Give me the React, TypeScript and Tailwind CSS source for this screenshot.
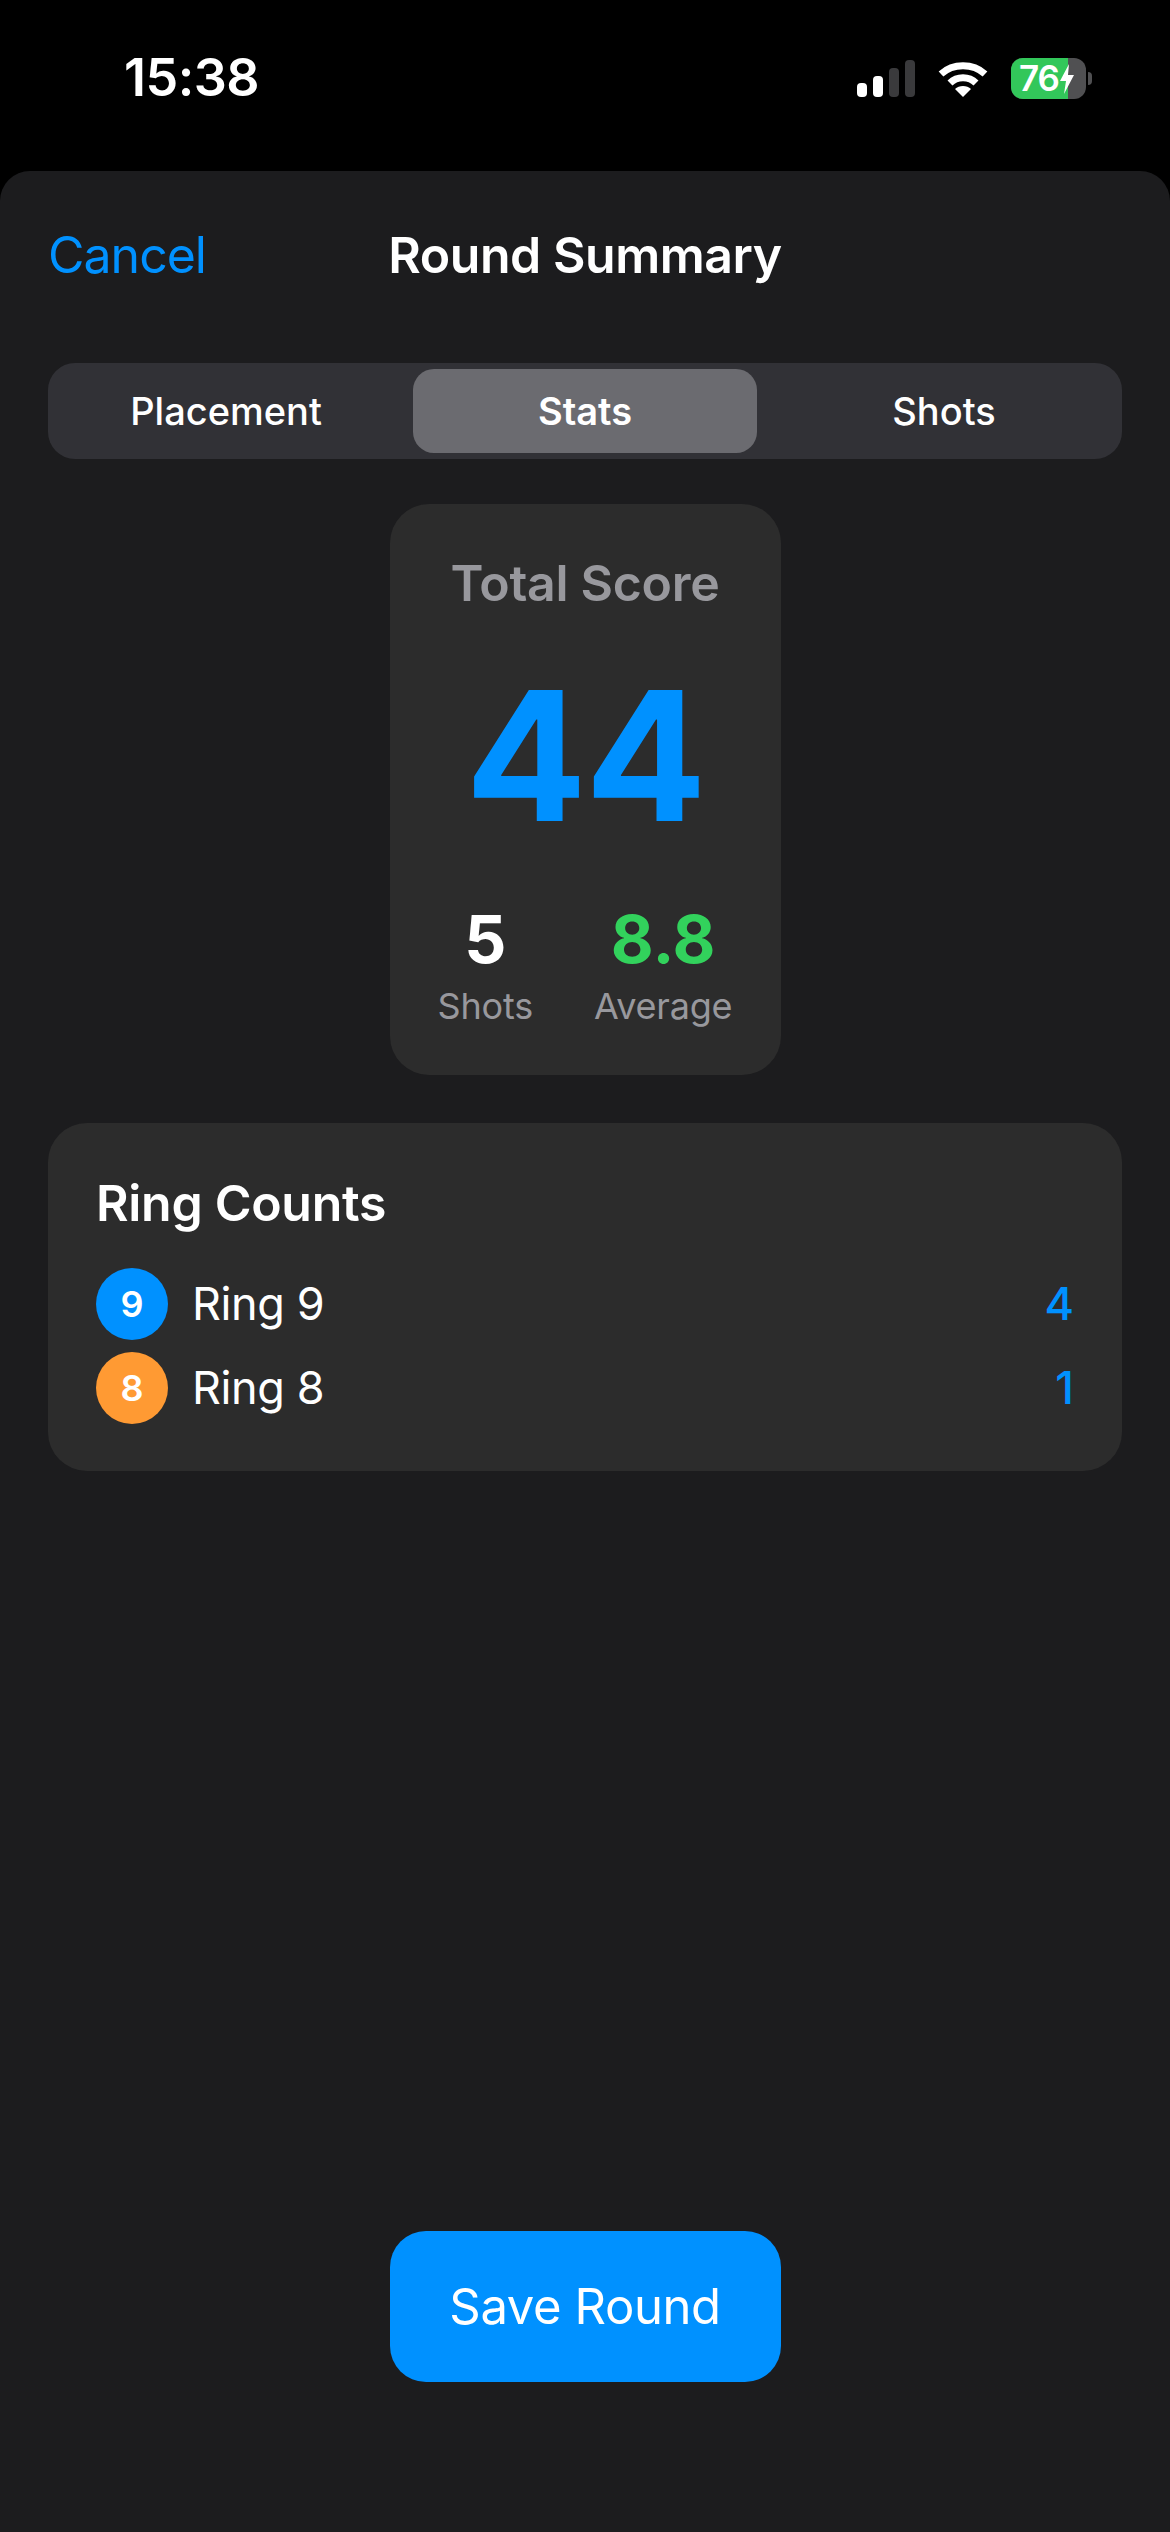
const tabs = ["Placement", "Stats", "Shots"];

const rings = [
  { ring: 9, count: 4, color: "bg-[#0091ff]" },
  { ring: 8, count: 1, color: "bg-[#ff9a33]" },
];

function StatusIcons() {
  return (
    <div className="flex items-center">
      <svg width="60" height="37" viewBox="0 0 60 37" className="mr-[21px]">
        <rect x="0" y="23" width="10" height="14" rx="4" fill="#fff" />
        <rect x="16" y="16" width="10" height="21" rx="4" fill="#fff" />
        <rect x="32" y="8" width="10" height="29" rx="4" fill="#3a3a3c" />
        <rect x="48" y="0" width="10" height="37" rx="4" fill="#3a3a3c" />
      </svg>
      <svg width="50" height="37" viewBox="0 0 50 37" className="mr-[23px]">
        <path d="M3 14 C15 3 35 3 47 14" fill="none" stroke="#fff" strokeWidth="7" strokeLinecap="butt" />
        <path d="M12 23 C19 16 31 16 38 23" fill="none" stroke="#fff" strokeWidth="7" strokeLinecap="butt" />
        <path d="M25 37 L17 29 C21 25 29 25 33 29 Z" fill="#fff" />
      </svg>
      <div className="relative flex h-[41px] w-[75px] items-center overflow-hidden rounded-[12px] bg-[#505052]">
        <div className="absolute inset-y-0 left-0 w-[57px] bg-[#32c75a]" />
        <span className="relative ml-[8px] text-[35px] leading-none font-semibold tracking-[-1px] text-white">76</span>
        <svg width="14" height="30" viewBox="0 0 14 30" className="relative ml-[1px]">
          <path d="M9 0 L0 17 H6 L4 30 L14 11 H8 Z" fill="#fff" />
        </svg>
      </div>
      <div className="ml-[2px] h-[13px] w-[4px] rounded-r-full bg-[#505052]" />
    </div>
  );
}

export default function App() {
  return (
    <div className="flex h-[2532px] w-[1170px] flex-col bg-black font-['Inter',sans-serif] text-white antialiased">
      {/* status bar */}
      <div className="flex h-[171px] shrink-0 items-start justify-between pt-[50px] pr-[78px] pl-[124px]">
        <span className="text-[52px] leading-[56px] font-semibold tracking-[-0.5px]">15:38</span>
        <div className="pt-[8px]">
          <StatusIcons />
        </div>
      </div>

      <div className="flex flex-1 flex-col rounded-t-[30px] bg-[#1c1c1e] px-[48px]">
        {/* nav */}
        <div className="grid grid-cols-[1fr_auto_1fr] items-center pt-[54px]">
          <span className="text-[50px] leading-[60px] tracking-[-1px] text-[#0091ff]">Cancel</span>
          <span className="text-[50px] leading-[60px] font-semibold tracking-[-0.45px]">Round Summary</span>
          <span />
        </div>

        {/* segmented control */}
        <div className="mt-[78px] grid h-[96px] grid-cols-3 items-center gap-[15px] rounded-[27px] bg-[#313136] px-[6px]">
          {tabs.map((tab) => (
            <div
              key={tab}
              className={
                tab === "Stats"
                  ? "flex h-[84px] items-center justify-center rounded-[21px] bg-[#6b6b70] text-[38px] font-semibold"
                  : "flex h-[84px] items-center justify-center text-[38px] font-medium"
              }
            >
              {tab}
            </div>
          ))}
        </div>

        {/* score card */}
        <div className="mt-[45px] flex h-[571px] w-[391px] flex-col items-center self-center rounded-[39px] bg-[#2c2c2c] pt-[49px]">
          <span className="text-[50px] leading-[60px] font-semibold tracking-[-0.3px] text-[#98989d]">Total Score</span>
          <span className="mt-[39px] text-[180px] leading-[208px] font-bold tracking-[-2px] text-[#0091ff]">44</span>
          <div className="mt-[43px] flex gap-[61px]">
            <div className="flex flex-col items-center">
              <span className="text-[66px] leading-[72px] font-bold">5</span>
              <span className="mt-[6px] text-[36px] leading-[50px] tracking-[-0.2px] text-[#98989d]">Shots</span>
            </div>
            <div className="flex flex-col items-center">
              <span className="text-[66px] leading-[72px] font-bold text-[#32d25c]">8.8</span>
              <span className="mt-[6px] text-[36px] leading-[50px] tracking-[-0.2px] text-[#98989d]">Average</span>
            </div>
          </div>
        </div>

        {/* ring counts */}
        <div className="mt-[48px] flex h-[348px] flex-col rounded-[39px] bg-[#2c2c2c] px-[48px] pt-[50px]">
          <span className="text-[50px] leading-[60px] font-semibold tracking-[-0.3px]">Ring Counts</span>
          <div className="mt-[35px] flex flex-col gap-[12px]">
            {rings.map((r) => (
              <div key={r.ring} className="flex h-[72px] items-center">
                <div className={`flex h-[72px] w-[72px] items-center justify-center rounded-full text-[36px] font-semibold ${r.color}`}>
                  {r.ring}
                </div>
                <span className="ml-[24px] flex-1 text-[45px] tracking-[-0.4px]">Ring {r.ring}</span>
                <span className="text-[45px] font-medium text-[#0091ff]">{r.count}</span>
              </div>
            ))}
          </div>
        </div>

        {/* save */}
        <button className="mt-[760px] h-[151px] w-[391px] self-center rounded-[36px] bg-[#0091ff] text-[49px] tracking-[-0.4px]">
          Save Round
        </button>
      </div>
    </div>
  );
}
